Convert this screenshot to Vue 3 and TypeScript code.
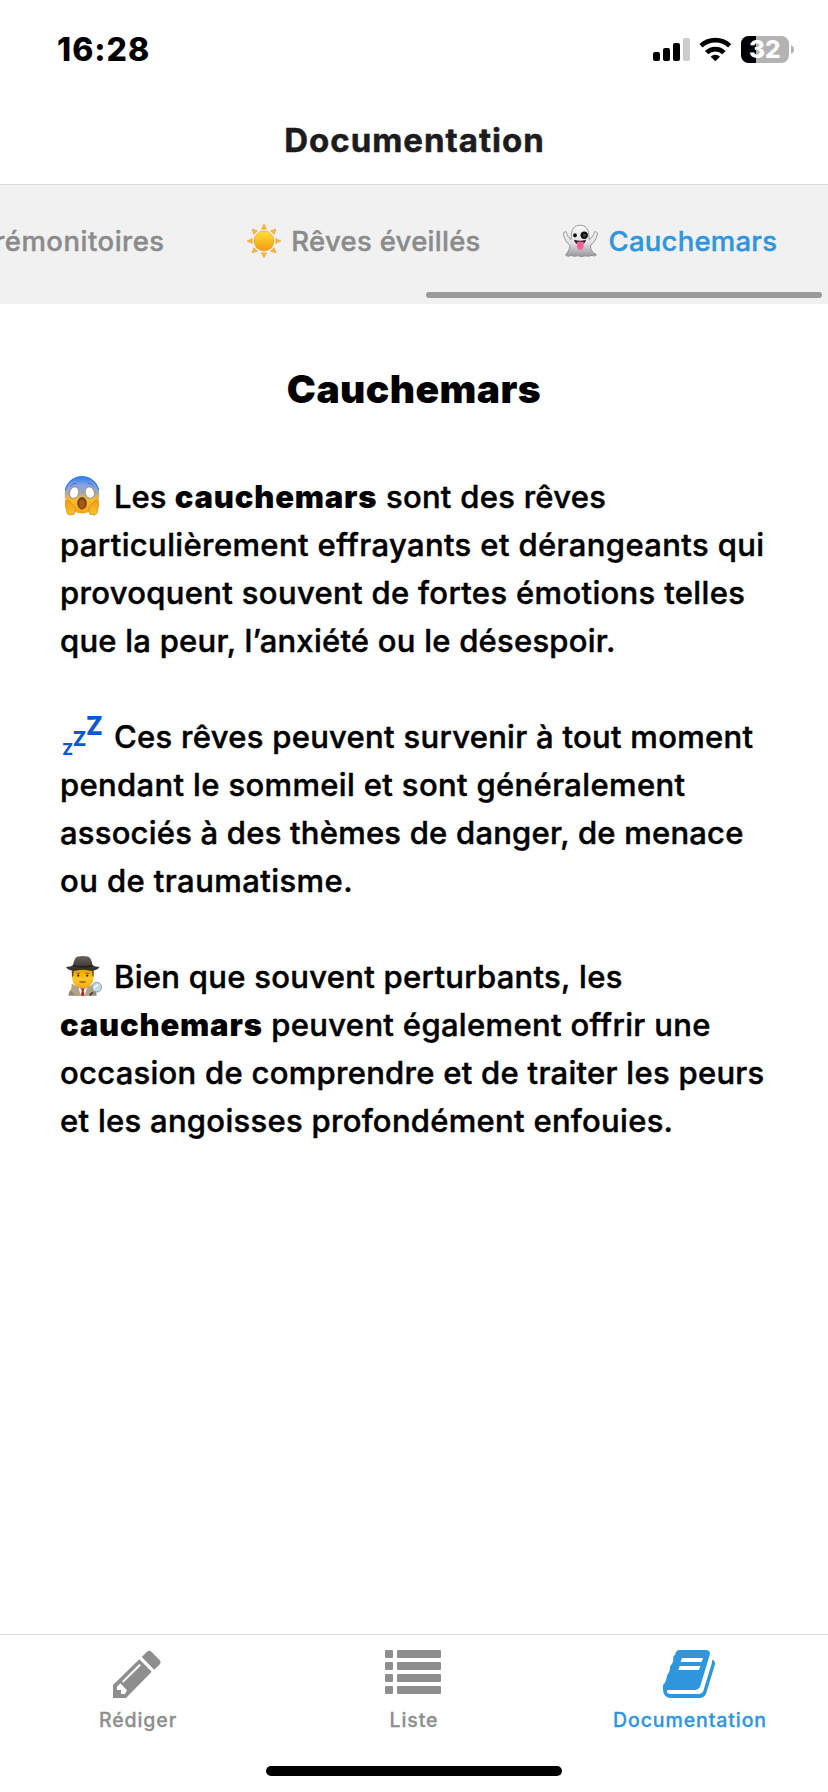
<script setup lang="ts">
interface Run { text: string; tracking: number; strong?: boolean }
interface Paragraph { icon: 'scream' | 'zzz' | 'detective'; lines: Run[][] }

const paragraphs: Paragraph[] = [
  {
    icon: 'scream',
    lines: [
      [
        { text: 'Les ', tracking: 0 },
        { text: 'cauchemars', tracking: 0.8, strong: true },
        { text: ' sont des rêves', tracking: 0.28 },
      ],
      [{ text: 'particulièrement effrayants et dérangeants qui', tracking: 0.378 }],
      [{ text: 'provoquent souvent de fortes émotions telles', tracking: 0.335 }],
      [{ text: 'que la peur, l’anxiété ou le désespoir.', tracking: 0.24 }],
    ],
  },
  {
    icon: 'zzz',
    lines: [
      [{ text: 'Ces rêves peuvent survenir à tout moment', tracking: 0.29 }],
      [{ text: 'pendant le sommeil et sont généralement', tracking: 0.35 }],
      [{ text: 'associés à des thèmes de danger, de menace', tracking: 0.217 }],
      [{ text: 'ou de traumatisme.', tracking: 0.43 }],
    ],
  },
  {
    icon: 'detective',
    lines: [
      [{ text: 'Bien que souvent perturbants, les', tracking: 0.297 }],
      [
        { text: 'cauchemars', tracking: 0.8, strong: true },
        { text: ' peuvent également offrir une', tracking: 0.333 },
      ],
      [{ text: 'occasion de comprendre et de traiter les peurs', tracking: 0.28 }],
      [{ text: 'et les angoisses profondément enfouies.', tracking: 0.29 }],
    ],
  },
]

const rays = [0, 45, 90, 135, 180, 225, 270, 315]
const listRows = [0, 12, 24, 36]
</script>

<template>
  <div class="screen">
    <div class="status">
      <span class="time">16:28</span>
      <svg class="status-icons" viewBox="99 45 426 87" width="142" height="29">
        <rect x="99" y="96" width="21" height="27" rx="6" />
        <rect x="129" y="84" width="21" height="39" rx="6" />
        <rect x="159" y="69" width="21" height="54" rx="6" />
        <rect x="189" y="54" width="21" height="69" rx="6" fill="#ccc" />
        <g fill="none" stroke="#000">
          <path d="M243 77 A64 64 0 0 1 329 77" stroke-width="14" />
          <path d="M260 98 A37 37 0 0 1 312 98" stroke-width="14" />
        </g>
        <path d="M286 124 L272 110 A20 20 0 0 1 300 110 Z" />
        <rect x="363" y="48" width="144" height="81" rx="23" fill="#b3b3b3" />
        <path d="M408 48 H386 A23 23 0 0 0 363 71 V106 A23 23 0 0 0 386 129 H408 Z" />
        <path d="M513 76 Q522 79 522 89 Q522 98 513 101 Z" fill="#b3b3b3" />
        <text x="387" y="114" class="charge" textLength="95" lengthAdjust="spacingAndGlyphs">32</text>
      </svg>
    </div>

    <header class="header"><h1 class="title">Documentation</h1></header>

    <nav class="tabs">
      <div class="tab-row">
        <div class="tab"><span class="t1">Rêves prémonitoires</span></div>
        <div class="tab">
          <svg class="sun" width="36" height="36" viewBox="-18 -18 36 36">
            <defs>
              <linearGradient id="sun" x1="0" y1="0" x2="0" y2="1">
                <stop offset="0" stop-color="#fde03a" />
                <stop offset="1" stop-color="#f59a0c" />
              </linearGradient>
            </defs>
            <path v-for="r in rays" :key="r" d="M-2.6 -11.8 L0 -17 L2.6 -11.8 Z" fill="#fbb930" stroke="#e39b45" stroke-width=".5" :transform="`rotate(${r})`" />
            <circle r="10" fill="url(#sun)" stroke="#e9992a" stroke-width=".6" />
          </svg>
          <span class="t2">Rêves éveillés</span>
        </div>
        <div class="tab active">
          <svg class="ghost" width="38" height="34" viewBox="0 0 38 34">
            <defs>
              <linearGradient id="ghost" x1="0" y1="0" x2="0" y2="1">
                <stop offset="0" stop-color="#fafafa" />
                <stop offset=".55" stop-color="#e3e3e5" />
                <stop offset="1" stop-color="#98989c" />
              </linearGradient>
            </defs>
            <path d="M17.8 1.2 C12.2 1.2 9.6 5.5 9.4 10.5 L9.2 15.5 C6.5 14 5.2 11 4.4 8.2 C3.8 6.8 2.8 7.4 2.9 8.6 C2 7.8 1 8.8 1.5 10.2 C2.3 15 4.6 19 8 21.5 C7.6 25.5 5.8 28 3.5 31 C5 32.6 7.4 32.4 9.5 31.4 C11.5 32.6 14 32.6 16 31.6 C18.4 33 21.2 32.8 23.2 31.8 C26 33 28.3 31.6 30 31.4 C32 32.4 34.2 31.8 34.4 30.6 C30.2 28.5 28.5 25.5 28.2 21.5 C32 19 34.6 14.5 35.4 10 C35.8 8.6 34.8 7.8 34.2 8.7 C34 7.2 32.8 7 32.4 8.3 C31.4 11.2 30 14 27.2 15.5 L26.8 10.5 C26.4 5 23.6 1.2 17.8 1.2 Z" fill="url(#ghost)" stroke="#8f8f94" stroke-width=".9" />
            <ellipse cx="13" cy="11.3" rx="1.9" ry="2.1" fill="#111" />
            <circle cx="22.2" cy="11.3" r="3.7" fill="#151515" />
            <circle cx="22.4" cy="11.2" r="1.3" fill="#4d4d4d" />
            <path d="M12 15.8 Q18 17.8 24 15.8 Q22.8 20.8 18 20.8 Q13.3 20.8 12 15.8 Z" fill="#39141c" />
            <path d="M15 18 Q18.3 17.2 21.7 18 V22.5 Q21.3 26 18.4 26 Q15.3 26 15 22.5 Z" fill="#f3689c" />
            <path d="M18.3 19 V23" stroke="#d9447c" stroke-width=".7" />
          </svg>
          <span class="t3">Cauchemars</span>
        </div>
      </div>
      <div class="scrollbar"></div>
    </nav>

    <main class="content">
      <h2 class="heading">Cauchemars</h2>
      <div v-for="p in paragraphs" :key="p.icon" class="paragraph">
        <div v-for="(line, i) in p.lines" :key="i" class="line">
          <template v-if="i === 0">
            <svg v-if="p.icon === 'scream'" class="emoji" viewBox="0 0 42 42">
              <defs>
                <linearGradient id="face" x1="0" y1="0" x2="0" y2="1">
                  <stop offset="0" stop-color="#2f78ee" />
                  <stop offset=".22" stop-color="#86a5e6" />
                  <stop offset=".42" stop-color="#9ea7b4" />
                  <stop offset=".62" stop-color="#f2bd36" />
                  <stop offset="1" stop-color="#f5a519" />
                </linearGradient>
                <linearGradient id="hand" x1="0" y1="0" x2="0" y2="1">
                  <stop offset="0" stop-color="#f19a16" />
                  <stop offset="1" stop-color="#fbc52b" />
                </linearGradient>
              </defs>
              <path d="M20 1 C30 1 37.3 8.5 37.3 18.5 C37.3 29 30 37.4 20 37.4 C10 37.4 2.7 29 2.7 18.5 C2.7 8.5 10 1 20 1 Z" fill="url(#face)" />
              <path d="M3.4 14 A17 17 0 0 1 36.6 14" fill="none" stroke="#2f78ee" stroke-width="1.2" />
              <path d="M8 10.3 Q10 7.2 14 7.3 M26 7.3 Q30 7.2 32 10.3" fill="none" stroke="#4f6cb4" stroke-width="1" stroke-linecap="round" />
              <ellipse cx="12.2" cy="16.6" rx="4.5" ry="5.8" transform="rotate(18 12.2 16.6)" fill="#fff" stroke="#8f8175" stroke-width=".7" />
              <ellipse cx="27.8" cy="16.6" rx="4.5" ry="5.8" transform="rotate(-18 27.8 16.6)" fill="#fff" stroke="#8f8175" stroke-width=".7" />
              <ellipse cx="20" cy="27.2" rx="4.7" ry="6.2" fill="#7c430c" />
              <ellipse cx="20" cy="27.7" rx="2.8" ry="4.3" fill="#a35b17" />
              <path d="M3.8 24.5 Q5.5 23 7.5 25 L12.5 30.5 Q14.2 32.8 12.8 35 L12.2 38 Q11 39.4 9.8 38.2 Q8.4 39.8 6.8 38.4 Q4.8 38.6 5 36 Q2.5 30 3.8 24.5 Z" fill="url(#hand)" stroke="#df8d16" stroke-width=".8" />
              <path d="M36.2 24.5 Q34.5 23 32.5 25 L27.5 30.5 Q25.8 32.8 27.2 35 L27.8 38 Q29 39.4 30.2 38.2 Q31.6 39.8 33.2 38.4 Q35.2 38.6 35 36 Q37.5 30 36.2 24.5 Z" fill="url(#hand)" stroke="#df8d16" stroke-width=".8" />
            </svg>
            <svg v-else-if="p.icon === 'zzz'" class="emoji zzz" viewBox="0 0 42 42">
              <text x="0.2" y="39" font-size="16.5" textLength="10.8" lengthAdjust="spacingAndGlyphs">Z</text>
              <text x="10.7" y="29.7" font-size="20.5" textLength="13.6" lengthAdjust="spacingAndGlyphs">Z</text>
              <text x="24" y="19" font-size="26" textLength="16.8" lengthAdjust="spacingAndGlyphs">Z</text>
            </svg>
            <svg v-else class="emoji" viewBox="0 0 42 42">
              <defs>
                <linearGradient id="skin" x1="0" y1="0" x2="0" y2="1">
                  <stop offset="0" stop-color="#e79a10" />
                  <stop offset=".5" stop-color="#fbc62c" />
                  <stop offset="1" stop-color="#f3ac20" />
                </linearGradient>
                <linearGradient id="hat" x1="0" y1="0" x2="0" y2="1">
                  <stop offset="0" stop-color="#6a625c" />
                  <stop offset="1" stop-color="#2f2b29" />
                </linearGradient>
              </defs>
              <path d="M6.5 39.7 Q6.5 34 12 31.8 L15 29.5 H26 L30 32 Q34.5 34 34.7 39.7 Z" fill="#94896f" />
              <path d="M9.8 27.5 L15 31 L20.5 39.7 H14 L9 35 Z M31.5 28 L26.5 31 L21.5 39.7 H28 L32 35 Z" fill="#b0a588" />
              <path d="M16 31 L20.7 34 L25.5 31 L22.5 39.7 H19 Z" fill="#f2f3f7" />
              <path d="M19.2 32.8 H22.2 L21.6 35 L22.6 39.7 H18.9 L19.8 35 Z" fill="#b41f26" />
              <path d="M10 13 H31.5 V22 Q31 32 20.8 32 Q10.8 32 10 22 Z" fill="url(#skin)" />
              <path d="M9.7 14 H12 L11.3 20 L10 21 Z M31.7 14 H29.8 L30.5 20 L31.6 21 Z" fill="#6d4a20" />
              <path d="M14.2 17.4 L18 17.2 M23.4 17.2 L27.2 17.4" stroke="#8a5a17" stroke-width=".9" />
              <circle cx="16.2" cy="19.6" r="1.1" fill="#352110" />
              <circle cx="25.2" cy="19.6" r="1.1" fill="#352110" />
              <path d="M17.6 25.8 Q20.7 26.4 23.8 25.8" fill="none" stroke="#8b3b17" stroke-width="1.1" />
              <path d="M4 11.5 Q4.5 10.4 8 10.5 L11.2 9 Q12.2 1.5 16 .6 Q20.6 -.6 25.5 .6 Q29.4 1.5 30.4 9 L33.5 10.5 Q37 10.4 37.4 11.5 Q34.5 14.8 28 14.8 Q20.5 12.8 13.5 14.8 Q7 14.8 4 11.5 Z" fill="url(#hat)" />
              <path d="M11 8.4 Q20.7 11.4 30.4 8.4 L30.6 10.4 Q20.7 13.2 10.8 10.4 Z" fill="#25211f" />
              <path d="M30.6 36 L27.8 39.5" stroke="#39393b" stroke-width="1.6" />
              <circle cx="34.8" cy="31.2" r="4.8" fill="#c3dbea" stroke="#8c9aa5" stroke-width="1" />
              <path d="M32.2 32 L36 28.4" stroke="#fff" stroke-width="1.1" />
            </svg>
          </template>
          <span class="text"><component :is="run.strong ? 'strong' : 'span'" v-for="(run, j) in line" :key="j" :style="{ letterSpacing: run.tracking + 'px' }">{{ run.text }}</component></span>
        </div>
      </div>
    </main>

    <footer class="bottom">
      <div class="items">
        <div class="item">
          <svg width="48" height="48" viewBox="159 90 144 144" fill="#8e8e8e">
            <path d="M238 118 L275 155 L198 234 H159 V195 Z" />
            <path d="M245 111 L260 96 Q267 89 275 96 L298 119 Q305 127 298 134 L283 149 Z" />
            <path d="M186 184 L238 132 L243 136 L190 188 Z M181 190 L201 211 L195 222 H183 V210 H171 V200 Z" fill="#fff" />
          </svg>
          <span>Rédiger</span>
        </div>
        <div class="item">
          <svg width="56" height="48" viewBox="0 0 56 48" fill="#8e8e8e">
            <template v-for="y in listRows" :key="y">
              <rect x="0" :y="y" width="8" height="8" rx="1" />
              <rect x="12" :y="y" width="44" height="8" rx="1" />
            </template>
          </svg>
          <span>Liste</span>
        </div>
        <div class="item current">
          <svg width="54" height="48" viewBox="306 90 162 144" fill="#2f95dc">
            <path d="M357 90 H438 Q453 91 449 105 L421 198 Q417 209 406 210 H325 Q320 211 320 215 Q321 221 330 222 H418 Q427 221 430 213 L455 131 Q457 124 456 119 Q467 123 465 133 L439 219 Q434 233 421 234 H330 Q315 233 310 217 Q308 208 309 197 Q310 192 314 189 Q319 181 320 173 Q320 169 322 165 Q329 155 330 147 Q329 142 331 138 Q340 127 340 120 Q338 114 341 109 Q346 104 347 98 Q350 91 357 90 Z" />
            <path d="M366 114 H429 L425 126 H362 Z M359 138 H421 L417 150 H355 Z" fill="#fff" />
          </svg>
          <span>Documentation</span>
        </div>
      </div>
      <div class="home-indicator"></div>
    </footer>
  </div>
</template>

<style>
body { background: #fff; }
</style>

<style scoped>
.screen {
  width: 828px;
  height: 1792px;
  display: flex;
  flex-direction: column;
  overflow: hidden;
  background: #fff;
  color: #000;
  font-family: Inter, "Noto Sans", sans-serif;
  white-space: nowrap;
}
.status {
  display: flex;
  justify-content: space-between;
  align-items: flex-start;
  height: 90px;
  padding: 30px 33px 0 57px;
}
.time { font-size: 32px; line-height: 40px; font-weight: 800; letter-spacing: 1px; }
.status-icons { margin-top: 5px; }
.charge { font-size: 71px; font-weight: 800; fill: #fff; }
.header { height: 64px; border-bottom: 1px solid #d8d8d8; text-align: center; }
.title {
  margin: 0 0 0 1px;
  font-size: 33px;
  line-height: 40px;
  font-weight: 700;
  letter-spacing: 1px;
  color: #1c1c1e;
  -webkit-text-stroke: .5px #1c1c1e;
}
.tabs {
  display: flex;
  flex-direction: column;
  align-items: flex-end;
  height: 119px;
  overflow: hidden;
  background: #f1f1f1;
}
.tab-row {
  display: flex;
  gap: 81.3px;
  height: 71px;
  padding: 36px 50.8px 0 0;
}
.tab {
  display: flex;
  align-items: center;
  height: 40px;
  font-size: 27.5px;
  line-height: 40px;
  font-weight: 500;
  color: #8b8b8b;
  -webkit-text-stroke: .4px currentColor;
}
.tab svg { -webkit-text-stroke: 0; }
.tab.active { color: #2f95dc; }
.t1 { letter-spacing: .5px; }
.t2 { letter-spacing: .28px; }
.t3 { letter-spacing: .23px; }
.sun { margin-right: 9.4px; }
.ghost { margin-right: 8.5px; }
.scrollbar { width: 396px; height: 6px; margin-right: 6px; border-radius: 3px; background: #9b9b9b; }
.content { flex: 1; padding: 61px 60px 0; }
.heading { margin: 0 0 60px; font-size: 39px; line-height: 48px; font-weight: 900; letter-spacing: .42px; text-align: center; }
.paragraph { margin-bottom: 48px; }
.line { display: flex; align-items: center; height: 48px; }
.emoji { flex: none; width: 42px; height: 42px; margin: 0 10px 0 2px; overflow: visible; }
.zzz { fill: #0b57d0; font-weight: 800; }
.text { font-size: 31px; line-height: 48px; font-weight: 500; white-space: pre; -webkit-text-stroke: .45px #000; }
.text strong { font-weight: 900; -webkit-text-stroke: 0; }
.bottom { height: 157px; border-top: 1px solid #d8d8d8; }
.items { display: grid; grid-template-columns: repeat(3, 1fr); height: 131px; }
.item {
  display: flex;
  flex-direction: column;
  align-items: center;
  gap: 10px;
  padding-top: 15px;
  font-size: 19.5px;
  line-height: 24px;
  font-weight: 500;
  letter-spacing: .9px;
  color: #8e8e8e;
}
.item span { -webkit-text-stroke: .3px currentColor; }
.item svg { margin-right: 2px; }
.item.current { color: #2f95dc; }
.home-indicator { width: 296px; height: 10px; margin: 0 auto; border-radius: 5px; background: #000; }
</style>
